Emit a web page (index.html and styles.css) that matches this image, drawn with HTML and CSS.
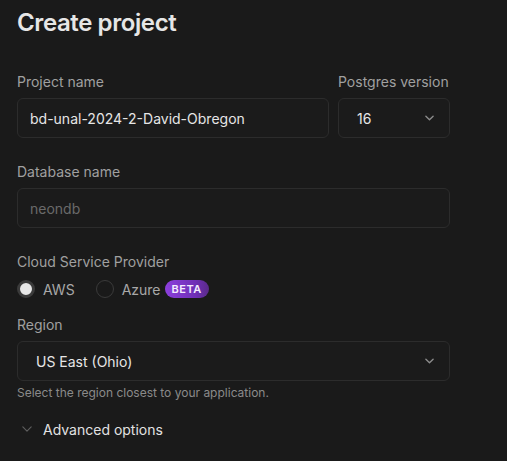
FILE: index.html
```html
<!DOCTYPE html>
<html lang="en">
<head>
<meta charset="utf-8">
<title>Create project</title>
<link rel="stylesheet" href="styles.css">
</head>
<body>
<div class="page">
  <h1 class="title">Create project</h1>

  <div class="row-two">
    <div class="field">
      <label class="label">Project name</label>
      <div class="input"><span class="value">bd-unal-2024-2-David-Obregon</span></div>
    </div>
    <div class="field">
      <label class="label">Postgres version</label>
      <div class="input select"><span class="value">16</span>
        <svg class="chev" width="10" height="6" viewBox="0 0 10 6"><path d="M1 1l4 4 4-4" fill="none" stroke="currentColor" stroke-width="1.5" stroke-linecap="round" stroke-linejoin="round"/></svg>
      </div>
    </div>
  </div>

  <div class="field gap-top">
    <label class="label">Database name</label>
    <div class="input"><span class="placeholder">neondb</span></div>
  </div>

  <div class="field gap-top">
    <label class="label">Cloud Service Provider</label>
    <div class="radios">
      <div class="radio-item"><span class="radio checked"></span><span class="radio-text">AWS</span></div>
      <div class="radio-item"><span class="radio"></span><span class="radio-text">Azure</span><span class="badge">BETA</span></div>
    </div>
  </div>

  <div class="field region">
    <label class="label">Region</label>
    <div class="input select"><span class="value">US East (Ohio)</span>
      <svg class="chev" width="10" height="6" viewBox="0 0 10 6"><path d="M1 1l4 4 4-4" fill="none" stroke="currentColor" stroke-width="1.5" stroke-linecap="round" stroke-linejoin="round"/></svg>
    </div>
    <p class="help">Select the region closest to your application.</p>
  </div>

  <div class="advanced">
    <svg class="adv-chev" width="12" height="7" viewBox="0 0 12 7"><path d="M1 1l5 5 5-5" fill="none" stroke="currentColor" stroke-width="1.4" stroke-linecap="round" stroke-linejoin="round"/></svg>
    <span>Advanced options</span>
  </div>
</div>
</body>
</html>
```

FILE: styles.css
```css
html, body {
  margin: 0;
  padding: 0;
  background: #1a1a1a;
}
body {
  font-family: Inter, "Noto Sans", sans-serif;
  color: #e4e4e4;
  width: 507px;
  height: 461px;
  overflow: hidden;
}
.page {
  width: 433px;
  padding: 7px 0 0 17px;
  display: flex;
  flex-direction: column;
}
.title {
  margin: 0;
  font-size: 24px;
  line-height: 32px;
  font-weight: 600;
  color: #e6e6e6;
  letter-spacing: -0.4px;
}
.row-two {
  margin-top: 33px;
  display: grid;
  grid-template-columns: 1fr 112px;
  column-gap: 9px;
}
.field {
  display: flex;
  flex-direction: column;
}
.gap-top {
  margin-top: 24px;
}
.label {
  font-size: 14px;
  line-height: 20px;
  color: #a0a0a0;
  margin-bottom: 6px;
}
.input {
  box-sizing: border-box;
  height: 40px;
  border: 1px solid #2c2c2c;
  border-radius: 6px;
  background: #1b1b1b;
  display: flex;
  align-items: center;
  padding: 0 12px;
  font-size: 14px;
}
.value {
  color: #e6e6e6;
}
.placeholder {
  color: #6a6a6a;
}
.select {
  justify-content: space-between;
  padding-left: 18px;
  padding-right: 15px;
}
.chev {
  color: #8c8c8c;
  width: 9px;
  height: 6px;
}
.radios {
  display: flex;
  align-items: center;
  height: 20px;
  margin-top: 1px;
}
.radio-item {
  display: flex;
  align-items: center;
  margin-right: 21px;
}
.radio {
  box-sizing: border-box;
  width: 18px;
  height: 18px;
  border-radius: 50%;
  border: 1px solid #3a3a3a;
  margin-right: 8px;
}
.radio.checked {
  border: 3px solid #3b3b3b;
  background: #e8e8e8;
}
.radio-text {
  font-size: 14px;
  color: #a8a8a8;
}
.badge {
  margin-left: 4px;
  height: 18px;
  padding: 0 7px;
  border-radius: 9px;
  background: linear-gradient(90deg, #8c3fdc 0%, #6e2fb5 70%, #5a2a88 100%);
  color: #f4ecff;
  font-size: 11px;
  font-weight: 600;
  letter-spacing: 0.5px;
  line-height: 18px;
}
.region {
  margin-top: 16px;
}
.help {
  margin: 4px 0 0;
  font-size: 12px;
  line-height: 16px;
  color: #8a8a8a;
}
.advanced {
  margin-top: 16px;
  display: flex;
  align-items: center;
  height: 24px;
  font-size: 14px;
  color: #e2e2e2;
}
.adv-chev {
  color: #5e5e5e;
  margin-left: 5px;
  margin-right: 11px;
  width: 10px;
  height: 6px;
}
```
